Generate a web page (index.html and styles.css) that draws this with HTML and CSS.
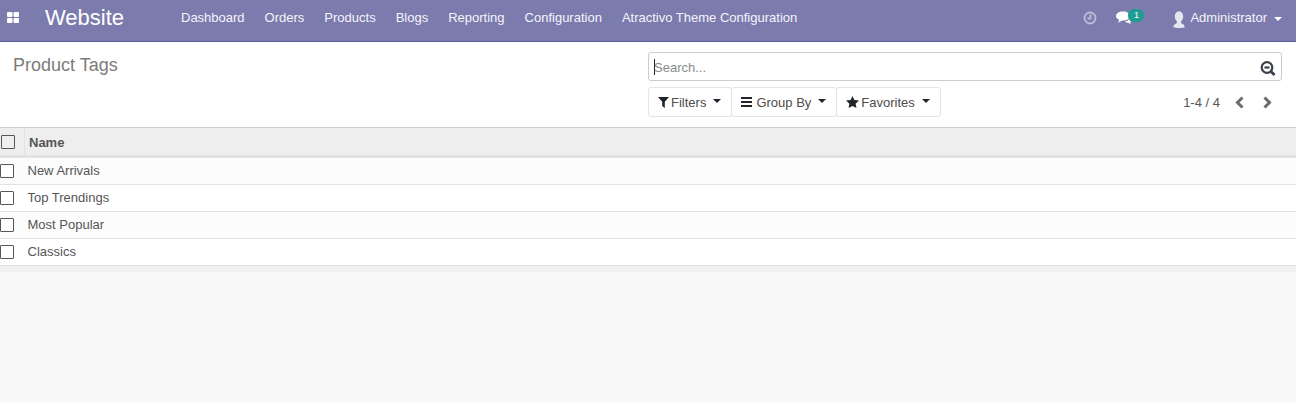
FILE: index.html
```html
<!DOCTYPE html>
<html lang="en">

<head>
    <meta charset="UTF-8">
    <title>Product Tags</title>
    <link rel="stylesheet" href="styles.css">
</head>

<body>
    <header class="navbar">
        <svg class="apps" width="12" height="11" viewBox="0 0 12 11">
            <rect x="0" y="0" width="5.500" height="5" rx="1"></rect>
            <rect x="6.500" y="0" width="5.500" height="5" rx="1"></rect>
            <rect x="0" y="6" width="5.500" height="5" rx="1"></rect>
            <rect x="6.500" y="6" width="5.500" height="5" rx="1"></rect>
        </svg>
        <span class="brand">Website</span>
        <nav class="menu">
            <a>Dashboard</a>
            <a>Orders</a>
            <a>Products</a>
            <a>Blogs</a>
            <a>Reporting</a>
            <a>Configuration</a>
            <a>Atractivo Theme Configuration</a>
        </nav>
        <div class="systray">
            <svg class="clock" width="14" height="14" viewBox="0 0 14 14">
                <circle cx="7" cy="7" r="5.500"></circle>
                <path d="M7.500 3.500 V7.500 H4.500"></path>
            </svg>
            <span class="chat">
                <svg width="16" height="14" viewBox="0 0 16 14">
                    <path class="bubble" d="M7 0.500 C11 0.500 14 2.500 14 5 C14 7.500 11 9.500 7 9.500 L5.800 9.500 C4.600 10.600 3.200 11.200 1.800 11.400 C2.700 10.500 3.200 9.600 3.200 8.800 C1.200 8 0 6.600 0 5 C0 2.500 3 0.500 7 0.500 Z"></path>
                    <path class="bubble" d="M14.200 6 C15.300 6.600 16 7.500 16 8.500 C16 9.600 15.300 10.500 14.200 11 C14.200 11.700 14.500 12.400 15.200 13 C14 12.800 13 12.300 12.300 11.700 C11 11.700 9.700 11.400 8.800 10.800 C11.200 10.500 13.500 8.800 14.200 6 Z"></path>
                </svg>
                <span class="badge">1</span>
            </span>
            <span class="user">
                <svg class="avatar" width="14" height="17" viewBox="0 0 14 17">
                    <ellipse class="bubble" cx="7" cy="5.500" rx="4.200" ry="5.300"></ellipse>
                    <path class="bubble" d="M5 10 H9 L9.500 12.500 C10.800 13.200 12.500 13.500 12.500 15.500 V16.500 C10 17.100 4 17.100 1.500 16.500 V15.500 C1.500 13.500 3.200 13.200 4.500 12.500 Z"></path>
                </svg>
                Administrator
                <i class="caret"></i>
            </span>
        </div>
    </header>

    <section class="control">
        <h1 class="title">Product Tags</h1>
        <div class="right">
            <div class="search">
                <span class="cursor"></span>
                <span class="placeholder">Search...</span>
                <svg class="lens" width="16" height="15" viewBox="0 0 16 15">
                    <circle cx="7" cy="6.500" r="5.300"></circle>
                    <path d="M4.500 6.500 H9.500"></path>
                    <path class="handle" d="M11 10.500 L14.500 14"></path>
                </svg>
            </div>
            <div class="tools">
                <div class="btns">
                    <button class="btn">
                        <svg width="11" height="12" viewBox="0 0 11 12"><path d="M0 1 H11 L6.800 5.800 V12 L4.200 10 V5.800 Z"></path></svg>
                        Filters <i class="caret dark"></i>
                    </button>
                    <button class="btn">
                        <svg class="bars" width="12" height="10" viewBox="0 0 12 10"><path d="M0 0 H11 V2 H0 Z M0 4 H11 V6 H0 Z M0 8 H11 V10 H0 Z"></path></svg>
                        Group By <i class="caret dark"></i>
                    </button>
                    <button class="btn">
                        <svg width="13" height="12" viewBox="0 0 13 12"><path d="M6.500 0 L8.400 4 L13 4.600 L9.600 7.700 L10.500 12 L6.500 9.900 L2.500 12 L3.400 7.700 L0 4.600 L4.600 4 Z"></path></svg>
                        Favorites <i class="caret dark"></i>
                    </button>
                </div>
                <div class="pager">
                    <span>1-4 / 4</span>
                    <svg class="arrow" width="10" height="13" viewBox="0 0 10 13"><path d="M7.500 1.500 L2.500 6.500 L7.500 11.500"></path></svg>
                    <svg class="arrow" width="10" height="13" viewBox="0 0 10 13"><path d="M2.500 1.500 L7.500 6.500 L2.500 11.500"></path></svg>
                </div>
            </div>
        </div>
    </section>

    <main class="content">
        <div class="thead">
            <div class="check-cell"><span class="box head-box"></span></div>
            <div class="name-head">Name</div>
        </div>
        <div class="row odd"><span class="box"></span><span class="cell">New Arrivals</span></div>
        <div class="row"><span class="box"></span><span class="cell">Top Trendings</span></div>
        <div class="row odd"><span class="box"></span><span class="cell">Most Popular</span></div>
        <div class="row"><span class="box"></span><span class="cell">Classics</span></div>
        <div class="tfoot"></div>
    </main>
</body>

</html>
```

FILE: styles.css
```css
* {
    box-sizing: border-box;
}

html, body {
    height: 100%;
}

body {
    margin: 0;
    display: flex;
    flex-direction: column;
    overflow: hidden;
    background: #f9f9f9;
    color: #555;
    font-family: "Liberation Sans", Arial, sans-serif;
    font-size: 13px;
}

.navbar {
    height: 42px;
    flex: none;
    display: flex;
    align-items: center;
    padding: 0 14px 6px 7px;
    background: #7c7bad;
    border-bottom: 1px solid #5f5e97;
    color: #fff;
}

.apps {
    fill: #fff;
    flex: none;
}

.brand {
    margin-left: 26px;
    width: 136px;
    font-size: 22px;
}

.menu {
    display: flex;
    gap: 20px;
    color: #f4f4fa;
}

.systray {
    margin-left: auto;
    display: flex;
    align-items: center;
}

.clock {
    fill: none;
    stroke: #bcbcd8;
    stroke-width: 1.800;
}

.chat {
    position: relative;
    display: flex;
    margin-left: 19px;
    width: 28px;
}

.bubble {
    fill: #fff;
}

.user .bubble {
    fill: #e6e6ee;
}

.badge {
    position: absolute;
    left: 12px;
    top: -2px;
    width: 16px;
    height: 13px;
    border-radius: 6px;
    background: #1f9d93;
    color: #fff;
    font-size: 9px;
    line-height: 13px;
    text-align: center;
}

.user {
    display: flex;
    align-items: center;
    gap: 4px;
    margin-left: 28px;
    color: #f4f4fa;
}

.avatar {
    margin-top: 3px;
}

.caret {
    display: inline-block;
    width: 0;
    height: 0;
    margin-left: 3px;
    margin-top: 3px;
    border-top: 4px solid #fff;
    border-left: 4px solid transparent;
    border-right: 4px solid transparent;
}

.caret.dark {
    position: relative;
    top: -1px;
    margin-top: 0;
    margin-left: 7px;
    border-top-color: #212529;
}

.control {
    height: 86px;
    flex: none;
    display: flex;
    justify-content: space-between;
    padding: 10px 14px 0 13px;
    background: #fff;
    border-bottom: 1px solid #cfcfcf;
}

.title {
    margin: 2px 0 0;
    font-size: 18px;
    font-weight: 400;
    line-height: 22px;
    color: #7c7c7c;
}

.right {
    width: 634px;
}

.search {
    position: relative;
    display: flex;
    align-items: center;
    height: 29px;
    padding: 1px 0 0 5px;
    border: 1px solid #ccc;
    border-radius: 3px;
    color: #8a8a8a;
}

.cursor {
    width: 1px;
    height: 16px;
    background: #222;
}

.placeholder {
    margin-left: -1px;
}

.lens {
    position: absolute;
    right: 5px;
    top: 8px;
    fill: none;
    stroke: #3a4048;
    stroke-width: 2.200;
}

.handle {
    stroke-width: 2.800;
}

.tools {
    display: flex;
    justify-content: space-between;
    margin-top: 6px;
}

.btns {
    display: flex;
}

.btn {
    display: flex;
    align-items: center;
    height: 30px;
    padding: 0 10px 0 9px;
    background: #fff;
    border: 1px solid #e4e4e4;
    border-radius: 3px;
    margin-right: -1px;
    color: #4c4c4c;
    font: inherit;
}

.btn svg {
    fill: #212529;
    margin-right: 2px;
}

.btn .bars {
    margin-right: 3px;
}

.pager {
    display: flex;
    align-items: center;
}

.arrow {
    fill: none;
    stroke: #6b6b6b;
    stroke-width: 3;
    margin-left: 15px;
}

.arrow:last-child {
    margin-right: 10px;
    margin-left: 17px;
}

.content {
    flex: none;
}

.thead {
    display: flex;
    height: 30px;
    background: #eee;
    border-bottom: 3px solid #e3e3e3;
    font-weight: 700;
}

.check-cell {
    width: 25px;
    display: flex;
    align-items: center;
    padding-left: 1px;
    border-right: 1px solid #e3e3e3;
}

.name-head {
    padding-left: 4px;
    line-height: 30px;
}

.box {
    display: block;
    flex: none;
    width: 14px;
    height: 14px;
    background: #fff;
    border: 1px solid #555;
    border-radius: 1px;
}

.head-box {
    background: transparent;
}

.row {
    display: flex;
    align-items: center;
    gap: 13.500px;
    height: 27px;
    background: #fff;
    border-bottom: 1px solid #e2e2e6;
}

.row.odd {
    background: #fcfcfc;
}

.cell {
    padding-bottom: 2px;
}

.tfoot {
    height: 6px;
    background: #f0f0f0;
}
```
